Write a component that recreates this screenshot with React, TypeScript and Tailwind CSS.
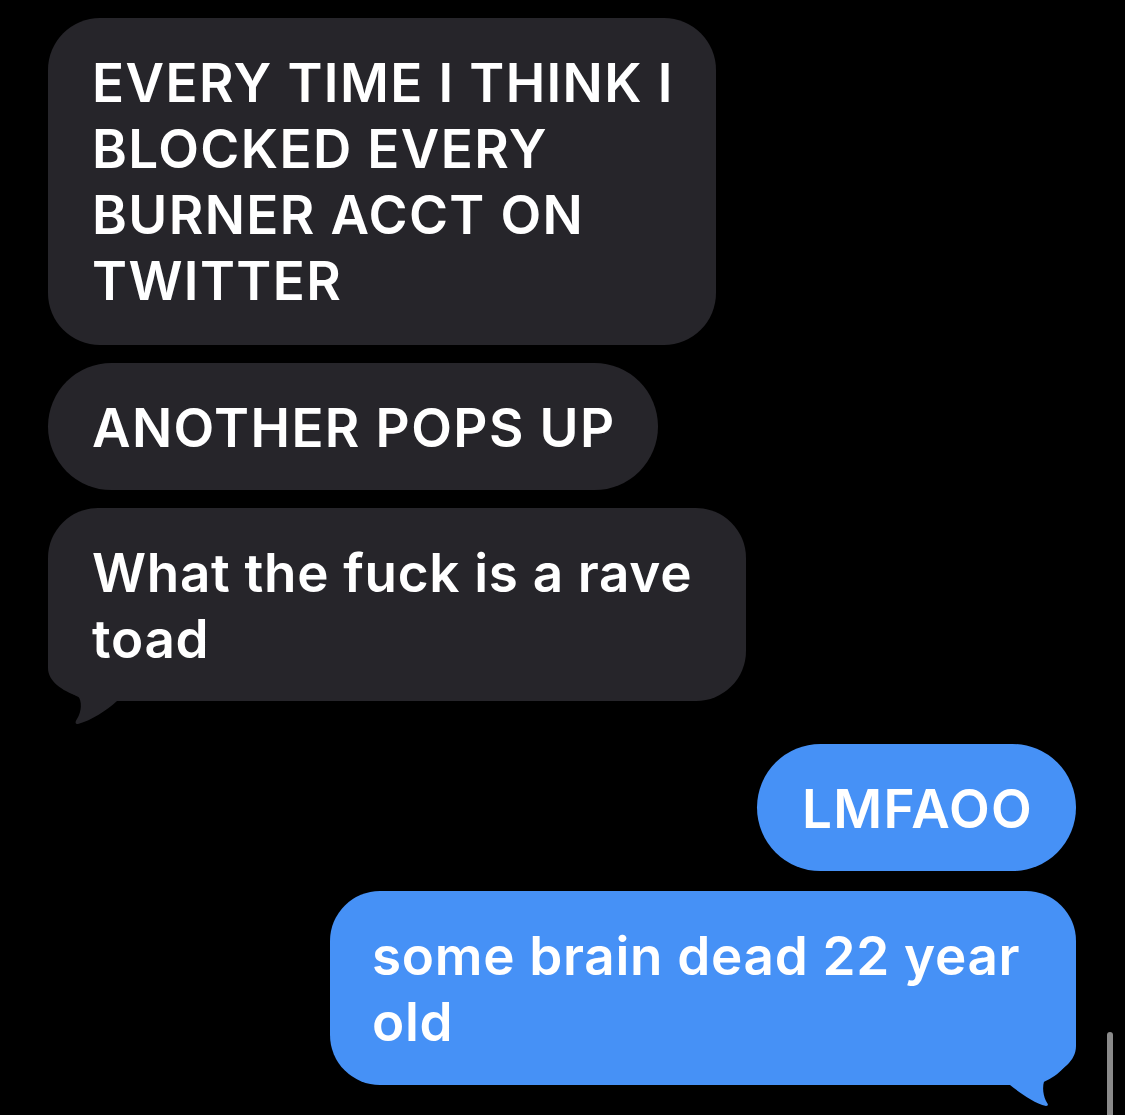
const font = { fontFamily: 'Inter, "Liberation Sans", sans-serif' };

function GrayTail() {
    return (
        <svg className="absolute -left-[4px] -bottom-[24px]" width="80" height="76" viewBox="0 0 80 76">
            <path
                d="M80,0 H4 V19 C4,32 18,42 34,47 C38,52 38,62 33,70 C31,73 31,75 34,75 C48,71 62,62 73,52 H80 Z"
                fill="#26252a"
            />
        </svg>
    );
}

function BlueTail() {
    return (
        <svg className="absolute -right-[4px] -bottom-[23px]" width="80" height="75" viewBox="0 0 80 75">
            <path
                d="M0,0 H76 V13 C76,28 62,38 47,44 C42,48 42,60 46,68 C48,71 49,73 46,73 C34,70 20,60 10,52 H0 Z"
                fill="#4691f6"
            />
        </svg>
    );
}

export default function App() {
    return (
        <div className="w-[1125px] h-[1115px] bg-black overflow-hidden relative" style={font}>
            <div className="flex flex-col pt-[18px] pl-[48px] pr-[49px] text-white text-[53px] leading-[66px] font-semibold">
                <div className="w-[668px] rounded-[52px] bg-[#26252a] pl-[44px] pr-[20px] pt-[32px] pb-[31px] tracking-[1.4px]">
                    EVERY TIME I THINK I<br />BLOCKED EVERY<br />BURNER ACCT ON<br />TWITTER
                </div>
                <div className="mt-[18px] w-fit rounded-full bg-[#26252a] pl-[44px] pr-[42px] pt-[32px] pb-[29px] tracking-[1.4px]">
                    ANOTHER POPS UP
                </div>
                <div className="relative mt-[18px] w-[698px] rounded-[50px] bg-[#26252a] pl-[44px] pr-[20px] pt-[32px] pb-[29px] tracking-[0.7px]">
                    <GrayTail />
                    <p className="relative">
                        What the fuck is a rave<br />toad
                    </p>
                </div>
                <div className="mt-[43px] self-end w-fit rounded-full bg-[#4691f6] pl-[45px] pr-[43px] pt-[32px] pb-[29px] tracking-[1.3px]">
                    LMFAOO
                </div>
                <div className="relative mt-[20px] self-end w-[746px] rounded-[50px] bg-[#4691f6] pl-[42px] pr-[20px] pt-[32px] pb-[30px] tracking-[0.7px]">
                    <BlueTail />
                    <p className="relative">
                        some brain dead 22 year<br />old
                    </p>
                </div>
            </div>
            <div className="absolute left-[1107px] top-[1032px] w-[6px] h-[100px] rounded-full bg-[#8a8a8a]" />
        </div>
    );
}
